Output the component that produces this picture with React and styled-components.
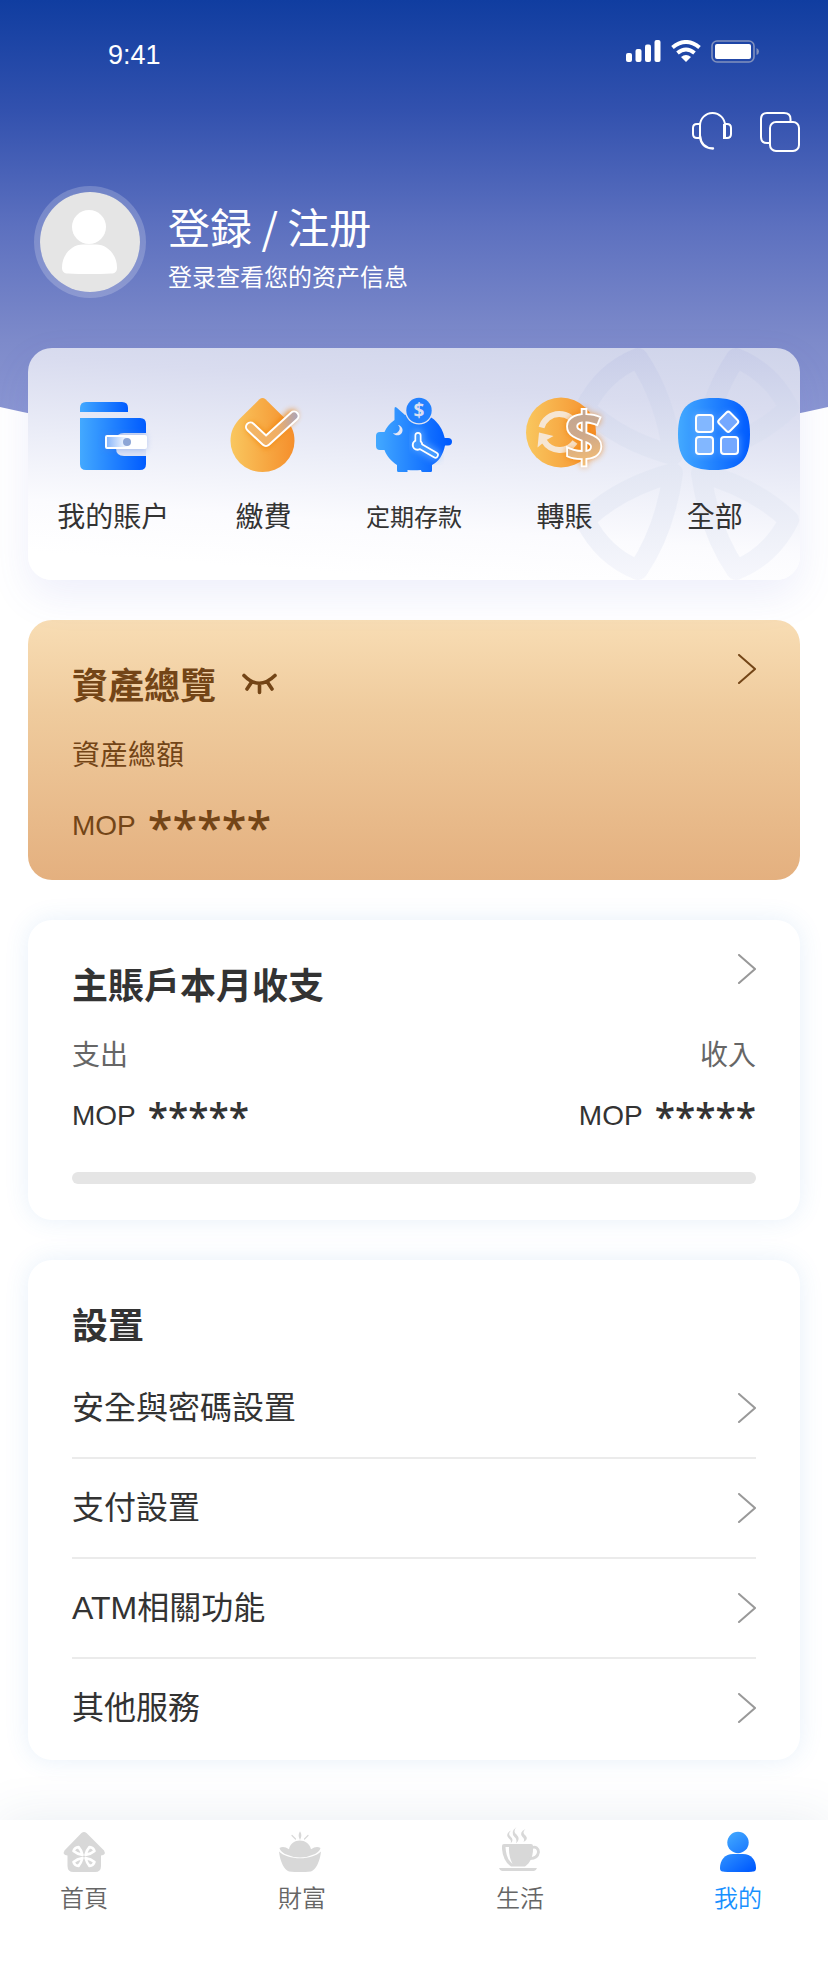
import React from "react";
import styled, { createGlobalStyle } from "styled-components";

const GlobalStyle = createGlobalStyle`
  * { box-sizing: border-box; }
  body {
    margin: 0;
    background: #fff;
    color: #333;
    font-family: "Liberation Sans", "Noto Sans CJK TC", "Noto Sans CJK SC", sans-serif;
  }
  h1, h2, p, ul { margin: 0; padding: 0; }
  ul { list-style: none; }
  svg { display: block; flex: none; }
  button {
    border: 0;
    padding: 0;
    background: none;
    color: inherit;
    font: inherit;
    cursor: pointer;
  }
  a { color: inherit; text-decoration: none; }
`;

const Page = styled.div`
  display: flex;
  flex-direction: column;
`;

const Header = styled.header`
  display: flex;
  flex-direction: column;
  min-height: 452px;
  color: #fff;
  background: linear-gradient(180deg, #103da0 0, #3251ae 110px, #5c70bf 225px, #7d8aca 340px, #8c97d3 420px);
  clip-path: ellipse(115% 100% at 50% 0);
`;

const StatusBar = styled.div`
  display: flex;
  align-items: center;
  justify-content: space-between;
  padding: 38px 69px 0 108px;
`;

const Clock = styled.time`
  font-size: 27px;
  line-height: 34px;
`;

const StatusIcons = styled.div`
  display: flex;
  gap: 10px;
  padding-bottom: 8px;
`;

const Actions = styled.div`
  display: flex;
  justify-content: flex-end;
  gap: 28px;
  padding: 40px 28px 0;
`;

const Profile = styled.div`
  display: flex;
  gap: 22px;
  padding: 34px 34px 0;
`;

const Avatar = styled.div`
  width: 112px;
  height: 112px;
  flex: none;
  border: 6px solid rgba(255, 255, 255, 0.2);
  border-radius: 50%;
  background: #e5e5e5;
  background-clip: padding-box;
`;

const ProfileText = styled.div`
  display: flex;
  flex-direction: column;
  gap: 4px;
  padding-top: 12px;
  font-family: "Noto Sans CJK SC", sans-serif;
`;

const LoginLink = styled.a`
  font-size: 42px;
  line-height: 56px;
`;

const LoginHint = styled.p`
  font-size: 24px;
  line-height: 36px;
`;

const Main = styled.main`
  position: relative;
  display: flex;
  flex-direction: column;
  gap: 40px;
  margin-top: -104px;
  padding: 0 28px 60px;
`;

const QuickCard = styled.nav`
  position: relative;
  display: grid;
  grid-template-columns: repeat(5, 1fr);
  padding: 40px 10px 42px;
  border-radius: 24px;
  background: linear-gradient(184deg, #cfd4ea 0%, #d9dcef 22%, #eceef8 50%, #fbfbfe 72%, #fff 90%);
  box-shadow: 0 16px 40px rgba(90, 100, 220, 0.1);
`;

const Watermark = styled.svg`
  position: absolute;
  top: 0;
  right: 0;
`;

const QuickLink = styled.a`
  position: relative;
  display: flex;
  flex-direction: column;
  align-items: center;
  gap: 14px;
  font-size: ${(p) => (p.$compact ? 24 : 28)}px;
  line-height: 40px;
  white-space: nowrap;
`;

const Card = styled.section`
  padding: 34px 44px ${(p) => p.$bottom}px;
  border-radius: 24px;
  color: ${(p) => (p.$gold ? "#734517" : "#333")};
  background: ${(p) => (p.$gold ? "linear-gradient(180deg, #f8ddb4, #efcb9d 35%, #e4b07f)" : "#fff")};
  box-shadow: ${(p) => (p.$gold ? "none" : "0 0 24px rgba(60, 130, 210, 0.12)")};
`;

const CardHead = styled.div`
  display: flex;
  align-items: flex-start;
  justify-content: space-between;
`;

const TitleGroup = styled.div`
  display: flex;
  align-items: center;
  gap: 25px;
  padding-top: 5px;
`;

const Title = styled.h2`
  font-size: 36px;
  font-weight: 600;
  font-family: "Noto Sans CJK TC", sans-serif;
  line-height: 48px;
`;

const Columns = styled.div`
  display: flex;
  justify-content: space-between;
`;

const Figure = styled.div`
  display: flex;
  flex-direction: column;
  align-items: ${(p) => (p.$end ? "flex-end" : "flex-start")};
  gap: 20px;
  padding-top: 29px;
`;

const Label = styled.p`
  font-size: 28px;
  line-height: 40px;
  color: ${(p) => (p.$muted ? "#666" : "inherit")};
`;

const Amount = styled.p`
  display: flex;
  align-items: center;
  gap: 12px;
  height: ${(p) => (p.$large ? 60 : 40)}px;
  font-size: 28px;
`;

const Mask = styled.span`
  font-family: "Open Sans", sans-serif;
  font-weight: 600;
  font-size: ${(p) => (p.$large ? 45 : 37)}px;
`;

const Track = styled.div`
  height: 12px;
  margin-top: 36px;
  border-radius: 6px;
  background: #e5e5e5;
`;

const SettingList = styled.ul`
  padding-top: 12px;
`;

const SettingItem = styled.li`
  & + & { border-top: 2px solid #ebebeb; }
`;

const SettingLink = styled.a`
  display: flex;
  align-items: center;
  justify-content: space-between;
  height: 98px;
  font-size: 32px;
  line-height: 44px;
`;

const TabBar = styled.nav`
  position: relative;
  display: flex;
  justify-content: space-between;
  min-height: 166px;
  padding: 8px 66px 0 60px;
  background: #fff;
  box-shadow: 0 0 48px rgba(40, 80, 130, 0.1);
`;

const Tab = styled.a`
  display: flex;
  flex-direction: column;
  align-items: center;
  gap: 7px;
  width: 48px;
  font-size: 24px;
  font-weight: 350;
  line-height: 36px;
  color: ${(p) => (p.$active ? "#1890ff" : "#666")};
  font-family: "Noto Sans CJK TC", sans-serif;
`;

const Blue = ({ id }) => (
  <linearGradient id={id} x1="0" y1="0" x2="1" y2="0">
    <stop offset="0" stopColor="#43a9ff" />
    <stop offset="1" stopColor="#005bff" />
  </linearGradient>
);

const Orange = ({ id }) => (
  <linearGradient id={id} x1="0" y1="0" x2="1" y2="0">
    <stop offset="0" stopColor="#f9c75f" />
    <stop offset="1" stopColor="#f58f2c" />
  </linearGradient>
);

const Glow = ({ id, size = 3 }) => (
  <filter id={id} x="-50%" y="-50%" width="200%" height="200%">
    <feGaussianBlur stdDeviation={size} />
  </filter>
);

const WalletIcon = () => (
  <svg width="96" height="96" viewBox="0 0 96 96" aria-hidden="true">
    <defs>
      <Blue id="wallet" />
      <Glow id="walletGlow" />
      <linearGradient id="belt">
        <stop offset="0" stopColor="#86b4fa" />
        <stop offset="0.55" stopColor="#fff" />
        <stop offset="1" stopColor="#fff" />
      </linearGradient>
    </defs>
    <path d="M15 24v-4q0-6 6-6h36q6 0 6 6v4z" fill="url(#wallet)" />
    <path d="M15 30h60q6 0 6 6v40q0 6-6 6H21q-6 0-6-6z" fill="url(#wallet)" />
    <path d="M81 45H59q-8 0-8 8v7q0 8 8 8h22z" fill="#dde3f5" />
    <rect x="39" y="46" width="42" height="16" fill="#4d7de0" opacity="0.4" filter="url(#walletGlow)" />
    <rect x="41" y="48" width="40" height="12" rx="1" fill="url(#belt)" stroke="#fff" strokeWidth="2" />
    <circle cx="62" cy="54" r="4" fill="#8da6d6" />
  </svg>
);

const DropIcon = () => (
  <svg width="96" height="96" viewBox="0 0 96 96" aria-hidden="true">
    <defs>
      <Orange id="drop" />
      <Glow id="dropGlow" />
      <linearGradient id="tick" gradientUnits="userSpaceOnUse" x1="30" y1="0" x2="83" y2="0">
        <stop offset="0" stopColor="#f4b765" />
        <stop offset="0.6" stopColor="#f0ae65" />
        <stop offset="0.88" stopColor="#bca6a4" />
        <stop offset="1" stopColor="#a9a7bf" />
      </linearGradient>
    </defs>
    <path d="M43.500 11.300q3-2.600 6 0L68 29.500C75 36.500 78.500 43 78.500 53a32 31 0 0 1-64 0C14.500 43 18 36.500 25 29.500z" fill="url(#drop)" />
    <path d="M36 40L50 54 76 27" fill="none" stroke="#f08000" strokeWidth="10" strokeLinecap="round" opacity="0.9" filter="url(#dropGlow)" />
    <path d="M34.500 39L50 53.500 78 28" fill="none" stroke="#fff" strokeWidth="11" strokeLinecap="round" strokeLinejoin="round" />
    <path d="M34.500 39L50 53.500 78 28" fill="none" stroke="url(#tick)" strokeWidth="7" strokeLinecap="round" strokeLinejoin="round" />
  </svg>
);

const PiggyIcon = () => (
  <svg width="96" height="96" viewBox="0 0 96 96" aria-hidden="true">
    <defs>
      <linearGradient id="pig" gradientUnits="userSpaceOnUse" x1="10" y1="0" x2="82" y2="0">
        <stop offset="0" stopColor="#43a9ff" />
        <stop offset="1" stopColor="#005bff" />
      </linearGradient>
      <Glow id="pigGlow" />
      <mask id="pigMask">
        <rect width="96" height="96" fill="#fff" />
        <circle cx="53" cy="22.500" r="14" fill="#000" />
        <path d="M32 37a5.200 5.200 0 1 1-5 8a4.800 4.800 0 0 0 5-8z" fill="#000" />
      </mask>
    </defs>
    <g fill="url(#pig)" mask="url(#pigMask)">
      <path d="M28.500 21q0-3 2-1.500L39 27C52 22 63 26 70 33.500q6.500 6.500 8.700 16.500H82q4 0 4 3.700t-4 3.700h-3C77 67 73 73 66 77v6q0 1-1.500 1h-8q-1.500 0-1.500-2-7 .5-13.500 0v2H32.500q-1.500 0-1.500-1.500V77C25 73 20.500 68 18.500 62H14q-4 0-4-4V48q0-4 4-4h4.500q3-7 10-12z" />
    </g>
    <circle cx="53" cy="22.500" r="12.700" fill="#2381ff" />
    <text x="53" y="29" textAnchor="middle" fontFamily="Open Sans" fontWeight="700" fontSize="19" fill="#d9def2">$</text>
    <path d="M52 47v10l17 10" fill="none" stroke="#7dbdff" strokeWidth="12" opacity="0.5" filter="url(#pigGlow)" strokeLinecap="round" />
    <g fill="none" stroke="#fff" strokeLinecap="round" strokeWidth="7">
      <path d="M52 47.500v9M52 57l17.300 10" />
      <circle cx="51.500" cy="57" r="2.200" />
    </g>
    <g fill="none" stroke="#449bff" strokeLinecap="round" strokeWidth="3.600">
      <path d="M52 47.500v9M52 57l17.300 10" />
      <circle cx="51.500" cy="57" r="2" />
    </g>
  </svg>
);

const TransferIcon = () => (
  <svg width="96" height="96" viewBox="0 0 96 96" aria-hidden="true">
    <defs>
      <Orange id="coin" />
      <Glow id="coinGlow" size={3.5} />
      <linearGradient id="dollar" gradientUnits="userSpaceOnUse" x1="60" y1="20" x2="72" y2="78">
        <stop offset="0" stopColor="#bfa695" />
        <stop offset="0.5" stopColor="#cfa98a" />
        <stop offset="1" stopColor="#f6be72" />
      </linearGradient>
    </defs>
    <circle cx="45" cy="44.500" r="35" fill="url(#coin)" />
    <g fill="none" stroke="#f6e6d3" strokeWidth="6">
      <path d="M25.500 39.500A18.500 18.500 0 0 1 61 39" />
      <path d="M28 53A18.500 18.500 0 0 0 59 54" />
    </g>
    <path d="M23 44.500l14.500 3.500-7 4-9 7.500z" fill="#f6e6d3" />
    <text x="68" y="74" textAnchor="middle" fontFamily="Open Sans" fontWeight="700" fontSize="70" fill="#f07c00" filter="url(#coinGlow)" opacity="0.9">$</text>
    <text x="68" y="74" textAnchor="middle" fontFamily="Open Sans" fontWeight="700" fontSize="70" fill="url(#dollar)" stroke="#fff" strokeWidth="1.800">$</text>
  </svg>
);

const AllIcon = () => (
  <svg width="96" height="96" viewBox="0 0 96 96" aria-hidden="true">
    <defs>
      <Blue id="all" />
      <Glow id="allGlow" />
    </defs>
    <path d="M47 10C73 10 83 20 83 46S73 82 47 82 11 72 11 46 21 10 47 10z" fill="url(#all)" />
    <g fill="#7ab5ff" opacity="0.5" filter="url(#allGlow)">
      <rect x="27" y="25" width="20" height="20" />
      <rect x="27" y="48" width="20" height="20" />
      <rect x="53" y="48" width="20" height="20" />
      <circle cx="61" cy="34" r="10" />
    </g>
    <g fill="#82b7ff" stroke="#fff" strokeWidth="2">
      <rect x="29" y="27" width="17" height="17" rx="3" />
      <rect x="29" y="49" width="17" height="17" rx="3" />
      <rect x="54" y="49" width="17" height="17" rx="3" fill="#74a8ff" />
      <rect x="53.500" y="26" width="15.500" height="15.500" rx="2.500" fill="#74a8ff" transform="rotate(45 61.250 33.750)" />
    </g>
  </svg>
);

const petal = "M63 10Q90 50 98 107Q45 93 10 60Q28 24 63 10z";

const CloverMark = () => (
  <Watermark width="225" height="232" viewBox="0 0 225 232" aria-hidden="true">
    <defs>
      <linearGradient id="clover" gradientUnits="userSpaceOnUse" x1="0" y1="0" x2="0" y2="232">
        <stop offset="0" stopColor="#c8cde8" />
        <stop offset="0.5" stopColor="#e2e6f3" />
        <stop offset="1" stopColor="#f6f7fc" />
      </linearGradient>
      <clipPath id="cardCorner"><path d="M0 0H201a24 24 0 0 1 24 24V208a24 24 0 0 1-24 24H0z" /></clipPath>
      <mask id="cloverMask">
        {["", "translate(224 0) scale(-1 1)", "translate(0 232) scale(1 -1)", "translate(224 232) scale(-1 -1)"].map((t) => (
          <path key={t} d={petal} transform={t} fill="none" stroke="#fff" strokeWidth="20" strokeLinejoin="round" />
        ))}
      </mask>
    </defs>
    <g clipPath="url(#cardCorner)">
      <rect width="225" height="232" fill="url(#clover)" mask="url(#cloverMask)" />
    </g>
  </Watermark>
);

const Chevron = ({ color = "#999" }) => (
  <svg width="19" height="30" viewBox="0 0 19 30" fill="none" stroke={color} strokeWidth="2" aria-hidden="true">
    <path d="M2 1l16 14L2 29" strokeLinecap="round" />
  </svg>
);

const SignalIcon = () => (
  <svg width="35" height="22" viewBox="0 0 35 22" fill="#fff" aria-hidden="true">
    <rect y="13" width="6" height="9" rx="2" />
    <rect x="9.500" y="9" width="6" height="13" rx="2" />
    <rect x="19" y="4.500" width="6" height="17.500" rx="2" />
    <rect x="28.500" width="6" height="22" rx="2" />
  </svg>
);

const WifiIcon = () => (
  <svg width="30" height="22" viewBox="0 0 30 22" aria-hidden="true">
    <g fill="none" stroke="#fff" strokeWidth="4">
      <path d="M1.500 7.500Q15-3.500 28.500 7.500" />
      <path d="M6.500 13Q15 6 23.500 13" />
    </g>
    <path d="M10 17Q15 13 20 17L15 22z" fill="#fff" />
  </svg>
);

const BatteryIcon = () => (
  <svg width="48" height="23" viewBox="0 0 48 23" aria-hidden="true">
    <rect x="1" y="1" width="42" height="21" rx="5" fill="none" stroke="#8191bd" strokeWidth="1.600" />
    <rect x="4" y="4" width="36" height="15" rx="2" fill="#fff" />
    <path d="M45.500 8q2.500 1 2.500 3.500t-2.500 3.500z" fill="#8191bd" />
  </svg>
);

const HeadsetIcon = () => (
  <svg width="40" height="40" viewBox="0 0 40 40" fill="none" stroke="#fff" strokeWidth="2" aria-hidden="true">
    <path d="M8 25V13.500a12.500 12.500 0 0 1 25 0V26" />
    <path d="M8 12H5q-4 0-4 4v6q0 4 4 4h3M33 12h2q4 0 4 4v6q0 4-4 4h-3V12" />
    <path d="M8 24Q9 36 21 36.500" strokeWidth="2.400" strokeLinecap="round" />
  </svg>
);

const CopyIcon = () => (
  <svg width="40" height="40" viewBox="0 0 40 40" fill="none" stroke="#fff" strokeWidth="2" aria-hidden="true">
    <path d="M9 31H7q-6 0-6-6V7q0-6 6-6h17q6.500 0 6.500 6v3" />
    <rect x="10" y="10" width="29" height="29" rx="6" />
  </svg>
);

const PersonIcon = () => (
  <svg width="100" height="100" viewBox="0 0 100 100" fill="#fff" aria-hidden="true">
    <circle cx="49" cy="35" r="17" />
    <path d="M43 52.500h13c12 0 21 11 21 23 0 4-2 6-6 6-13 .8-30 .8-43 0-4 0-6-2-6-6 0-12 9-23 21-23z" />
  </svg>
);

const ClosedEyeIcon = () => (
  <svg width="36" height="24" viewBox="0 0 36 24" fill="none" stroke="#734517" strokeWidth="3.600" strokeLinecap="round" aria-hidden="true">
    <path d="M3 4.500Q18 20 34 4.500M18.500 13v8.500M10 12l-4 6M27 12l4 6" />
  </svg>
);

const miniPetal = "M-1.500 -1.500Q-3-7-5.500-9.500Q-9.500-9-10.500-5.500Q-7-2.500-1.500-1.500z";

const HomeIcon = () => (
  <svg width="48" height="44" viewBox="-24 0 48 44" aria-hidden="true">
    <path d="M-2.500 5Q0 3 2.500 5L20 22.500q2.500 4.500-3 5V38q0 6-6 6H-10.500q-6 0-6-6V27.500q-5.500-.5-3-5z" fill="#d8d8d8" />
    <g transform="translate(0 28.500)" fill="none" stroke="#fff" strokeWidth="2.600" strokeLinejoin="round">
      <path d={miniPetal} />
      <path d={miniPetal} transform="scale(-1 1)" />
      <path d={miniPetal} transform="scale(1 -1)" />
      <path d={miniPetal} transform="scale(-1 -1)" />
    </g>
  </svg>
);

const IngotIcon = () => (
  <svg width="48" height="44" viewBox="-22 0 48 44" fill="#d8d8d8" aria-hidden="true">
    <path d="M-21 23.500C-12 32.500 12 32.500 21 23.500 20 33 16 42 11 43.500q-11 1-22 0C-16 42-20 33-21 23.500z" />
    <path d="M-20.500 20q4-2.500 9.500 1.200C-9 9.500 8.500 9.500 11 21.200q5.500-3.700 9.500-1.200Q20 23 15 26Q0 33-15 26Q-20 23-20.500 20z" />
    <path d="M0 4.500q1.500 2.500 0 6q-1.500-3.500 0-6zM-8 7.500l3.500 3.500M8 7.500l-3.500 3.500" stroke="#d8d8d8" strokeWidth="1.200" strokeLinecap="round" />
  </svg>
);

const CupIcon = () => (
  <svg width="48" height="46" viewBox="-24 -1 48 46" aria-hidden="true">
    <path d="M-18 19q0-2 2-2H11q2 0 2 2v3C13 30 10 36 5 39.500H-9Q-17 34-18 22z" fill="#d8d8d8" />
    <path d="M-14.500 20h3.500q-.5 9 3.500 17Q-14 32-14.500 20z" fill="#fff" />
    <path d="M12 20.500q6-1.500 6.500 4.500-1 7-9.500 6.500" fill="none" stroke="#d8d8d8" strokeWidth="2.800" />
    <path d="M-21 41H17q-1 3-3 3H-18q-2 0-3-3z" fill="#d8d8d8" />
    <g fill="#d8d8d8">
      <path d="M-9 3.500q-3.500 3.500-.5 6Q-5.500 13-9.500 16.500q1.500-3-1.500-5Q-15.500 7-9 3.500z" />
      <path d="M-3.500 0q-4 4.500 0 7.500Q1 12-4 16.500q1.500-4-1.500-6.500Q-10 5-3.500 0z" />
      <path d="M5.500 2q-4 3.500 0 6.500 3.500 3.500-2 6.500 1.500-3-1-5Q-1.500 5.500 5.500 2z" />
    </g>
  </svg>
);

const CupSlot = styled.span`
  display: flex;
  align-items: flex-end;
  height: 44px;
`;

const UserIcon = () => (
  <svg width="48" height="44" viewBox="-24 0 48 44" aria-hidden="true">
    <defs>
      <linearGradient id="user" gradientUnits="userSpaceOnUse" x1="-12" y1="6" x2="14" y2="42">
        <stop offset="0" stopColor="#43a9ff" />
        <stop offset="1" stopColor="#005bff" />
      </linearGradient>
    </defs>
    <g fill="url(#user)">
      <circle cx="0" cy="14.500" r="10.700" />
      <path d="M-5 26H5c8 0 13 6 13 14 0 3-1.500 3.500-4 3.700-8 .5-20 .5-28 0-2.500-.2-4-.7-4-3.700 0-8 5-14 13-14z" />
    </g>
  </svg>
);

const quickLinks = [
  { label: "我的賬户", Icon: WalletIcon },
  { label: "繳費", Icon: DropIcon },
  { label: "定期存款", Icon: PiggyIcon, compact: true },
  { label: "轉賬", Icon: TransferIcon },
  { label: "全部", Icon: AllIcon },
];

const settings = ["安全與密碼設置", "支付設置", "ATM相關功能", "其他服務"];

const tabs = [
  { label: "首頁", Icon: HomeIcon },
  { label: "財富", Icon: IngotIcon },
  { label: "生活", Icon: CupIcon },
  { label: "我的", Icon: UserIcon, active: true },
];

const MaskedAmount = ({ large }) => (
  <Amount $large={large}>
    MOP <Mask $large={large}>*****</Mask>
  </Amount>
);

export default function App() {
  return (
    <Page>
      <GlobalStyle />
      <Header>
        <StatusBar>
          <Clock>9:41</Clock>
          <StatusIcons>
            <SignalIcon />
            <WifiIcon />
            <BatteryIcon />
          </StatusIcons>
        </StatusBar>
        <Actions>
          <button aria-label="客服"><HeadsetIcon /></button>
          <button aria-label="切換"><CopyIcon /></button>
        </Actions>
        <Profile>
          <Avatar><PersonIcon /></Avatar>
          <ProfileText>
            <LoginLink href="#login">登録 / 注册</LoginLink>
            <LoginHint>登录查看您的资产信息</LoginHint>
          </ProfileText>
        </Profile>
      </Header>

      <Main>
        <QuickCard>
          <CloverMark />
          {quickLinks.map(({ label, Icon, compact }) => (
            <QuickLink key={label} href="#" $compact={compact}>
              <Icon />
              {label}
            </QuickLink>
          ))}
        </QuickCard>

        <Card $gold $bottom={24}>
          <CardHead>
            <TitleGroup>
              <Title>資產總覽</Title>
              <button aria-label="顯示金額"><ClosedEyeIcon /></button>
            </TitleGroup>
            <a href="#assets" aria-label="資產總覽"><Chevron color="#734517" /></a>
          </CardHead>
          <Figure>
            <Label>資産總額</Label>
            <MaskedAmount large />
          </Figure>
        </Card>

        <Card $bottom={36}>
          <CardHead>
            <TitleGroup>
              <Title>主賬戶本月收支</Title>
            </TitleGroup>
            <a href="#monthly" aria-label="主賬戶本月收支"><Chevron /></a>
          </CardHead>
          <Columns>
            <Figure>
              <Label $muted>支出</Label>
              <MaskedAmount />
            </Figure>
            <Figure $end>
              <Label $muted>收入</Label>
              <MaskedAmount />
            </Figure>
          </Columns>
          <Track />
        </Card>

        <Card $bottom={3}>
          <TitleGroup>
            <Title>設置</Title>
          </TitleGroup>
          <SettingList>
            {settings.map((name) => (
              <SettingItem key={name}>
                <SettingLink href="#">
                  {name}
                  <Chevron />
                </SettingLink>
              </SettingItem>
            ))}
          </SettingList>
        </Card>
      </Main>

      <TabBar>
        {tabs.map(({ label, Icon, active }) => (
          <Tab key={label} href="#" $active={active}>
            <CupSlot><Icon /></CupSlot>
            {label}
          </Tab>
        ))}
      </TabBar>
    </Page>
  );
}
